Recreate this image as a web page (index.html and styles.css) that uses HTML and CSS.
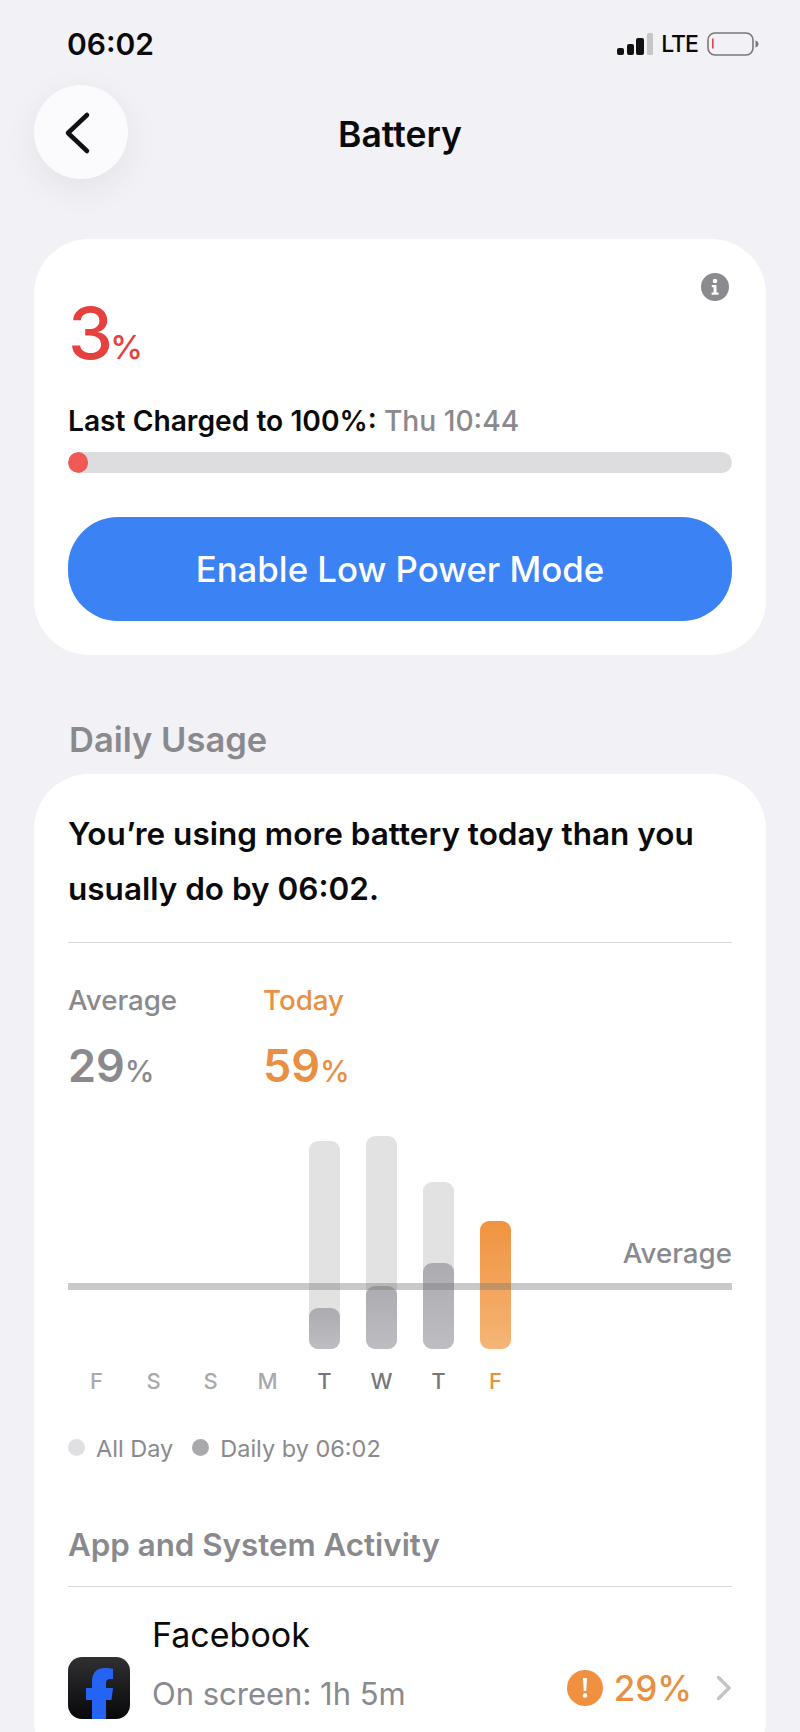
FILE: index.html
```html
<!DOCTYPE html>
<html lang="en">
<head>
<meta charset="UTF-8">
<meta name="viewport" content="width=device-width, initial-scale=1.0">
<title>Battery</title>
<link rel="stylesheet" href="styles.css">
</head>
<body>
  <div class="status-bar">
    <span class="status-time">06:02</span>
    <div class="status-icons">
      <svg class="signal" width="36" height="22" viewBox="0 0 36 22">
        <rect x="0" y="15" width="7" height="7" rx="2" fill="#111"/>
        <rect x="10" y="11" width="7" height="11" rx="2" fill="#111"/>
        <rect x="19" y="5" width="8" height="17" rx="2" fill="#111"/>
        <rect x="30" y="0" width="6" height="22" rx="1.5" fill="#c6c6c9"/>
      </svg>
      <span class="status-lte">LTE</span>
      <svg class="battery" width="52" height="24" viewBox="0 0 52 24">
        <rect x="1" y="1" width="45" height="22" rx="7" fill="none" stroke="#77777c" stroke-width="1.6"/>
        <rect x="5" y="6.5" width="1.6" height="10" fill="#e0474a"/>
        <path d="M48.5 8.5c2 .6 3 2 3 3.500s-1 2.900-3 3.500z" fill="#77777c"/>
      </svg>
    </div>
  </div>

  <div class="nav-bar">
    <button class="back-btn" aria-label="Back">
      <svg width="30" height="44" viewBox="0 0 30 44">
        <path d="M25 4 6 22l19 18" fill="none" stroke="#111" stroke-width="4.500" stroke-linecap="round" stroke-linejoin="round"/>
      </svg>
    </button>
    <h1 class="nav-title">Battery</h1>
  </div>

  <section class="card level-card">
    <svg class="info-icon" width="28" height="28" viewBox="0 0 28 28">
      <circle cx="14" cy="14" r="14" fill="#8b8b8f"/>
      <circle cx="14" cy="8" r="2.300" fill="#fff"/>
      <path d="M10.800 12h4.700v7.500h2v2.300h-6.900v-2.300h2v-5.200h-1.800z" fill="#fff"/>
    </svg>
    <div class="level-value">3<span class="level-unit">%</span></div>
    <p class="last-charged">Last Charged to 100%: <span class="last-charged-time">Thu 10:44</span></p>
    <div class="level-track"><div class="level-fill"></div></div>
    <button class="power-btn">Enable Low Power Mode</button>
  </section>

  <h2 class="section-label">Daily Usage</h2>

  <section class="card usage-card">
    <p class="usage-note">You’re using more battery today than you usually do by 06:02.</p>
    <hr class="rule">

    <div class="stats">
      <div class="stat">
        <div class="stat-label">Average</div>
        <div class="stat-value">29<span class="stat-unit">%</span></div>
      </div>
      <div class="stat stat-today">
        <div class="stat-label">Today</div>
        <div class="stat-value">59<span class="stat-unit">%</span></div>
      </div>
    </div>

    <div class="chart">
      <span class="avg-label">Average</span>
      <div class="avg-line"></div>
      <div class="bars">
        <div class="slot"></div>
        <div class="slot"></div>
        <div class="slot"></div>
        <div class="slot"></div>
        <div class="slot"><div class="bar" style="height:208px"><div class="bar-part" style="height:41px"></div></div></div>
        <div class="slot"><div class="bar" style="height:213px"><div class="bar-part" style="height:63px"></div></div></div>
        <div class="slot"><div class="bar" style="height:167px"><div class="bar-part" style="height:86px"></div></div></div>
        <div class="slot"><div class="bar bar-today" style="height:128px"></div></div>
      </div>
      <div class="days">
        <span class="day">F</span>
        <span class="day">S</span>
        <span class="day">S</span>
        <span class="day">M</span>
        <span class="day day-on">T</span>
        <span class="day day-on">W</span>
        <span class="day day-on">T</span>
        <span class="day day-today">F</span>
      </div>
    </div>

    <div class="legend">
      <span class="legend-item"><i class="dot dot-light"></i>All Day</span>
      <span class="legend-item"><i class="dot dot-dark"></i>Daily by 06:02</span>
    </div>

    <h3 class="activity-title">App and System Activity</h3>
    <hr class="rule">

    <div class="app-row">
      <svg class="app-icon" width="62" height="62" viewBox="0 0 62 62">
        <defs>
          <linearGradient id="fb-bg" x1="0" y1="0" x2="0" y2="1">
            <stop offset="0" stop-color="#303033"/>
            <stop offset="1" stop-color="#08080a"/>
          </linearGradient>
        </defs>
        <rect width="62" height="62" rx="14" fill="url(#fb-bg)"/>
        <path d="M24 62V43h-6V31h6v-6C24 15 29 11 37 11c3 0 6 .3 8 .8V22h-3c-3 0-4 1.500-4 4.500V31h7l-1.500 12H38v19z" fill="#2563f5"/>
      </svg>
      <div class="app-text">
        <div class="app-name">Facebook</div>
        <div class="app-sub">On screen: 1h 5m</div>
      </div>
      <div class="app-usage">
        <svg width="36" height="36" viewBox="0 0 36 36">
          <circle cx="18" cy="18" r="18" fill="#ef9140"/>
          <path d="M16 8h4l-.7 13h-2.600z" fill="#fff"/>
          <circle cx="18" cy="25.500" r="2.300" fill="#fff"/>
        </svg>
        <span class="app-percent">29%</span>
        <svg class="chevron" width="16" height="26" viewBox="0 0 16 26">
          <path d="M2.500 2.500 13 13 2.500 23.500" fill="none" stroke="#c4c4c7" stroke-width="3.500" stroke-linecap="round" stroke-linejoin="round"/>
        </svg>
      </div>
    </div>
  </section>
</body>
</html>
```

FILE: styles.css
```css
* {
  box-sizing: border-box;
}
html, body {
  height: 1732px;
}
body {
  margin: 0;
  overflow: hidden;
  background-color: #f1f1f6;
  color: #0a0a0a;
  font-family: Inter, "Noto Sans", Arial, sans-serif;
}

/* status bar */
.status-bar {
  display: flex;
  justify-content: space-between;
  align-items: center;
  height: 85px;
  padding: 2px 41px 0 67px;
}
.status-time {
  font-size: 30px;
  font-weight: 600;
}
.status-icons {
  display: flex;
  align-items: center;
}
.status-lte {
  font-size: 23px;
  font-weight: 500;
  letter-spacing: -1px;
  margin: 0 9px 0 8px;
}

/* nav */
.nav-bar {
  position: relative;
  display: flex;
  justify-content: center;
  align-items: center;
  height: 94px;
}
.back-btn {
  position: absolute;
  left: 34px;
  top: 0;
  display: flex;
  justify-content: center;
  align-items: center;
  width: 94px;
  height: 94px;
  padding: 2px 8px 0 0;
  border: none;
  border-radius: 50%;
  background-color: #fbfbfd;
  box-shadow: 0 10px 34px rgba(40, 40, 60, 0.07);
}
.nav-title {
  margin: 0 0 -4px;
  font-size: 35.500px;
  font-weight: 600;
}

/* cards */
.card {
  position: relative;
  margin: 0 34px;
  padding: 0 34px;
  background-color: #fff;
  border-radius: 55px;
}
.level-card {
  height: 416px;
  margin-top: 60px;
  padding-top: 58px;
}
.info-icon {
  position: absolute;
  top: 34px;
  right: 37px;
}
.level-value {
  display: flex;
  align-items: baseline;
  height: 72px;
  color: #e5423f;
  font-size: 72px;
  font-weight: 500;
  line-height: 72px;
}
.level-unit {
  font-size: 33px;
  margin-left: -3px;
}
.last-charged {
  margin: 36px 0 0;
  font-size: 28.200px;
  font-weight: 600;
  line-height: 32px;
}
.last-charged-time {
  color: #8a8a8e;
  font-weight: 500;
}
.level-track {
  height: 21px;
  margin-top: 15px;
  background-color: #dddddf;
  border-radius: 11px;
  overflow: hidden;
}
.level-fill {
  width: 20px;
  height: 100%;
  background-color: #ef5a55;
  border-radius: 11px;
}
.power-btn {
  display: block;
  width: 100%;
  height: 104px;
  margin-top: 44px;
  border: none;
  border-radius: 50px;
  background-color: #3b82f4;
  color: #fff;
  font-family: inherit;
  font-size: 34.800px;
  font-weight: 500;
}

.section-label {
  margin: 63px 0 0 69px;
  color: #8a8a8e;
  font-size: 34.500px;
  font-weight: 600;
  line-height: 44px;
}

.usage-card {
  margin-top: 12px;
  height: 1000px;
  padding-top: 32px;
}
.usage-note {
  margin: 0;
  font-size: 31.500px;
  font-weight: 600;
  line-height: 55px;
}
.rule {
  height: 1px;
  margin: 0;
  border: none;
  background-color: #d8d8da;
}
.usage-note + .rule {
  margin-top: 26px;
}

/* stats */
.stats {
  display: flex;
  margin-top: 38px;
}
.stat {
  width: 195px;
  color: #8a8a8e;
}
.stat-today {
  color: #e98f42;
}
.stat-label {
  font-size: 27.700px;
  font-weight: 500;
  line-height: 38px;
}
.stat-value {
  margin-top: 19px;
  font-size: 45px;
  font-weight: 600;
  line-height: 56px;
}
.stat-unit {
  font-size: 30px;
  font-weight: 500;
}

/* chart */
.chart {
  position: relative;
  margin-top: 37px;
}
.avg-label {
  position: absolute;
  right: 0;
  top: 100px;
  color: #8a8a8e;
  font-size: 27.700px;
  font-weight: 500;
  line-height: 34px;
}
.avg-line {
  position: absolute;
  left: 0;
  right: 0;
  top: 147px;
  height: 7px;
  background-color: rgba(120, 120, 125, 0.4);
}
.bars {
  display: flex;
  align-items: flex-end;
  height: 213px;
}
.slot {
  display: flex;
  justify-content: center;
  align-items: flex-end;
  width: 57px;
}
.bar {
  display: flex;
  align-items: flex-end;
  width: 31px;
  background-color: #e2e2e3;
  border-radius: 9px;
}
.bar-part {
  width: 100%;
  background: linear-gradient(#acacb0, #bdbdc2);
  border-radius: 9px;
}
.bar-today {
  background: linear-gradient(#f09340, #f5b576);
}
.days {
  display: flex;
  margin-top: 18px;
}
.day {
  width: 57px;
  color: #a9a9ad;
  font-size: 22px;
  font-weight: 500;
  line-height: 28px;
  text-align: center;
}
.day-on {
  color: #77777b;
}
.day-today {
  color: #ec8f3c;
}

/* legend */
.legend {
  display: flex;
  gap: 19px;
  margin-top: 38px;
}
.legend-item {
  display: flex;
  align-items: center;
  gap: 11px;
  color: #8a8a8e;
  font-size: 23.500px;
  line-height: 32px;
}
.dot {
  width: 17px;
  height: 17px;
  border-radius: 50%;
  margin-top: -3px;
}
.dot-light {
  background-color: #e0e0e2;
}
.dot-dark {
  background-color: #a9a9ad;
}

.activity-title {
  margin: 60px 0 0;
  color: #8a8a8e;
  font-size: 31.300px;
  font-weight: 600;
  line-height: 40px;
}
.activity-title + .rule {
  margin-top: 21px;
}

/* app row */
.app-row {
  display: flex;
  align-items: flex-end;
  margin-top: 25px;
}
.app-icon {
  flex: none;
}
.app-text {
  flex: 1;
  margin-left: 22px;
}
.app-name {
  font-size: 34px;
  line-height: 46px;
}
.app-sub {
  margin-top: 18px;
  color: #8a8a8e;
  font-size: 31px;
  line-height: 36px;
  margin-bottom: 7px;
}
.app-usage {
  display: flex;
  align-items: center;
  margin-bottom: 10px;
}
.app-percent {
  margin-left: 11px;
  color: #e98f42;
  font-size: 35px;
  font-weight: 500;
}
.chevron {
  margin-left: 24px;
}
```
